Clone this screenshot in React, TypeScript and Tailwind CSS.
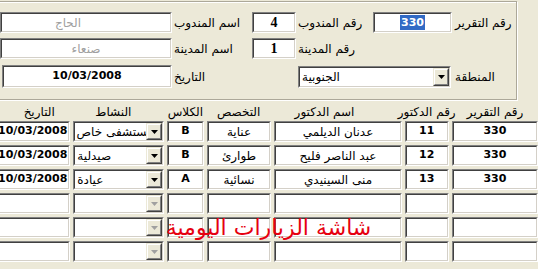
const Sunken = ({ className = "", inner = "", children }: { className?: string; inner?: string; children?: React.ReactNode }) => (
  <div className={`border border-t-[#808080] border-l-[#808080] border-b-white border-r-white ${className}`}>
    <div className={`h-full w-full border border-t-[#404040] border-l-[#404040] border-b-[#d4d0c8] border-r-[#d4d0c8] bg-white ${inner}`}>
      {children}
    </div>
  </div>
);

const DropButton = ({ disabled = false }: { disabled?: boolean }) => (
  <div className="h-full w-[16px] shrink-0 border border-t-[#ece9d8] border-l-[#ece9d8] border-b-[#404040] border-r-[#404040]">
    <div className="flex h-full w-full items-center justify-center border border-t-white border-l-white border-b-[#808080] border-r-[#808080] bg-[#ece9d8]">
      <svg width="7" height="4" viewBox="0 0 7 4">
        <path d="M0 0h7L3.5 4z" fill={disabled ? "#a0a0a0" : "#000"} />
      </svg>
    </div>
  </div>
);

// text starts at the left as in the old form; a long value runs under the button
const Combo = ({ text, disabled = false, clip = false, className = "" }: { text?: string; disabled?: boolean; clip?: boolean; className?: string }) => (
  <Sunken className={className} inner="flex">
    <div className={`flex min-w-0 flex-1 items-center overflow-hidden ${clip ? "justify-end" : "justify-start pl-[2px]"}`}>
      {text && (
        <span dir="rtl" className={`shrink-0 whitespace-nowrap ${clip ? "mr-[-7px]" : ""}`}>
          {text}
        </span>
      )}
    </div>
    <DropButton disabled={disabled} />
  </Sunken>
);

const rows = [
  { report: "330", doc: "11", name: "عدنان الديلمي", spec: "عناية", cls: "B", act: "مستشفى خاص", clip: true, date: "10/03/2008" },
  { report: "330", doc: "12", name: "عبد الناصر فليح", spec: "طوارئ", cls: "B", act: "صيدلية", clip: false, date: "10/03/2008" },
  { report: "330", doc: "13", name: "منى السينيدي", spec: "نسائية", cls: "A", act: "عيادة", clip: false, date: "10/03/2008" },
  null,
  null,
  null,
];

const Label = ({ className = "", children }: { className?: string; children: React.ReactNode }) => (
  <div className={`whitespace-nowrap ${className}`}>
    <span dir="rtl">{children}</span>
  </div>
);

export default function App() {
  return (
    <div className="relative h-[269px] w-[538px] overflow-hidden bg-[#ece9d8] font-['DejaVu_Sans',sans-serif] text-[12px] text-black">
      {/* header group */}
      <div className="ml-[-4px] mt-[1px] h-[99px] w-[521px] border border-[#aca899] pl-[3px] pt-[10px] shadow-[1px_1px_0_#fff,inset_1px_1px_0_#fff]">
        <div className="flex h-[21px] items-center">
          <Sunken className="h-[21px] w-[172px]" inner="flex items-center justify-center pr-[36px] text-[#a0a0a0]">
            <span dir="rtl">الحاج</span>
          </Sunken>
          <Label className="w-[80px] pl-[2px]">اسم المندوب</Label>
          <Sunken className="h-[21px] w-[44px]" inner="flex items-center justify-center font-['Liberation_Serif',serif] text-[14px] font-bold">4</Sunken>
          <Label className="w-[77px] pl-[2px]">رقم المندوب</Label>
          <Sunken className="h-[21px] w-[79px]" inner="flex items-center justify-center">
            <span className="bg-[#316ac5] px-[1px] text-[11px] font-bold leading-[15px] text-white">330</span>
          </Sunken>
          <Label className="pl-[3px]">رقم التقرير</Label>
        </div>
        <div className="mt-[5px] flex h-[21px] items-center">
          <Sunken className="h-[21px] w-[172px]" inner="flex items-center justify-center text-[#a0a0a0]">
            <span dir="rtl">صنعاء</span>
          </Sunken>
          <Label className="w-[80px] pl-[2px]">اسم المدينة</Label>
          <Sunken className="h-[21px] w-[44px]" inner="flex items-center justify-center font-['Liberation_Serif',serif] text-[14px] font-bold">1</Sunken>
          <Label className="pl-[2px]">رقم المدينة</Label>
        </div>
        <div className="mt-[6px] flex h-[23px] items-center">
          <Sunken className="ml-[2px] h-[23px] w-[170px]" inner="flex items-center justify-center text-[11px] font-bold">10/03/2008</Sunken>
          <Label className="w-[126px] pl-[2px]">التاريخ</Label>
          <Combo text="الجنوبية" className="mt-[1px] h-[22px] w-[153px]" />
          <Label className="pl-[4px]">المنطقة</Label>
        </div>
      </div>

      {/* column headers */}
      <div className="ml-[-10px] mt-[3px] flex h-[18px] items-center gap-[3px] whitespace-nowrap">
        <div className="w-[82px] pl-[18px] text-center" dir="rtl">التاريخ</div>
        <div className="w-[93px] pr-[11px] text-center" dir="rtl">النشاط</div>
        <div className="w-[37px] text-center" dir="rtl">الكلاس</div>
        <div className="w-[66px] text-center" dir="rtl">التخصص</div>
        <div className="w-[130px] pr-[26px] text-center" dir="rtl">اسم الدكتور</div>
        <div className="flex w-[45px] justify-center" dir="rtl"><span className="shrink-0">رقم الدكتور</span></div>
        <div className="w-[88px] text-center" dir="rtl">رقم التقرير</div>
      </div>

      {/* grid rows */}
      <div className="flex flex-col gap-[3px]">
        {rows.map((r, i) => (
          <div key={i} className="ml-[-10px] flex h-[21px] gap-[3px]">
            <Sunken className="w-[82px]" inner="flex items-center justify-end overflow-hidden whitespace-nowrap pr-[1px] text-[11px] font-bold">
              {r?.date}
            </Sunken>
            <Combo text={r?.act} clip={r?.clip} disabled={!r} className="w-[93px]" />
            <Sunken className="w-[37px]" inner="flex items-center justify-center text-[11px] font-bold">{r?.cls}</Sunken>
            <Sunken className="w-[66px]" inner="flex items-center justify-center"><span dir="rtl">{r?.spec}</span></Sunken>
            <Sunken className="w-[130px]" inner="flex items-center justify-center"><span dir="rtl">{r?.name}</span></Sunken>
            <Sunken className="w-[45px]" inner="flex items-center justify-center text-[11px] font-bold">{r?.doc}</Sunken>
            <Sunken className="w-[88px]" inner="flex items-center justify-center text-[11px] font-bold">{r?.report}</Sunken>
          </div>
        ))}
      </div>

      {/* watermark title */}
      <div className="absolute left-[162px] top-[212px] w-[213px] whitespace-nowrap text-center text-[22px] leading-[32px] text-[#e6000f]" dir="rtl">
        شاشة الزيارات اليومية
      </div>
    </div>
  );
}
